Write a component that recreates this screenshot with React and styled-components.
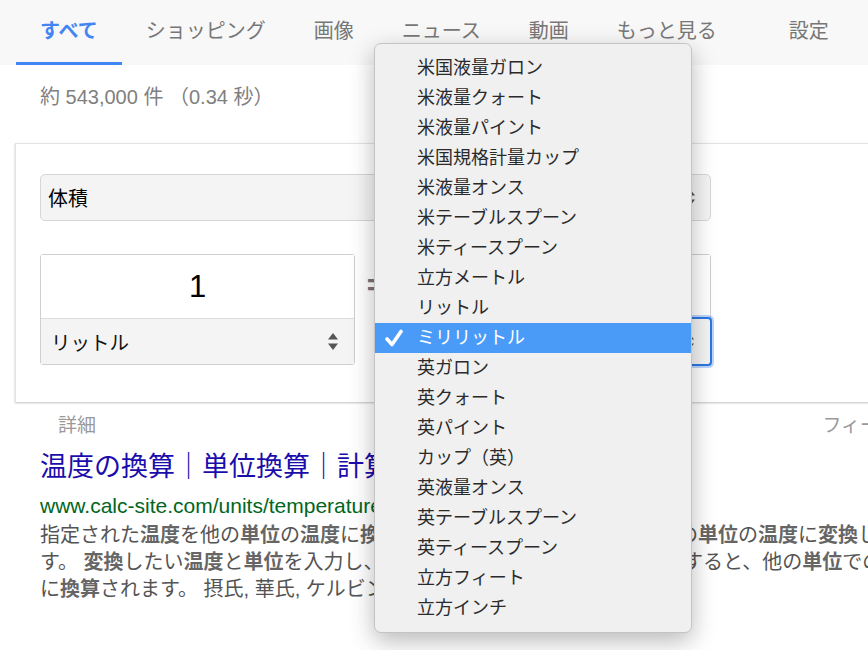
import React from 'react';
import styled, { createGlobalStyle } from 'styled-components';

// Global
const GlobalStyle = createGlobalStyle`
  html, body {
    margin: 0;
    padding: 0;
    background: #fff;
    overflow: hidden;
  }
  body {
    font-family: "Liberation Sans", Arial, "Noto Sans CJK JP", sans-serif;
  }
`;

// Data
const tabs = [
  { label: 'すべて', active: true },
  { label: 'ショッピング' },
  { label: '画像' },
  { label: 'ニュース' },
  { label: '動画' },
  { label: 'もっと見る' },
  { label: '設定', push: true },
];

const units = [
  '米国液量ガロン',
  '米液量クォート',
  '米液量パイント',
  '米国規格計量カップ',
  '米液量オンス',
  '米テーブルスプーン',
  '米ティースプーン',
  '立方メートル',
  'リットル',
  'ミリリットル',
  '英ガロン',
  '英クォート',
  '英パイント',
  'カップ（英）',
  '英液量オンス',
  '英テーブルスプーン',
  '英ティースプーン',
  '立方フィート',
  '立方インチ',
];

// Styled
const Page = styled.div`
  position: relative;
  width: 100vw;
  height: 650px;
  overflow: hidden;
`;

const Nav = styled.nav`
  display: flex;
  height: 65px;
  padding-left: 16px;
  background: #f8f8f8;
  width: 100%;
  box-sizing: border-box;
`;

const Tab = styled.div`
  display: flex;
  align-items: center;
  box-sizing: border-box;
  height: 65px;
  padding: 0 24px 4px;
  margin-left: ${p => (p.push ? '24px' : '0')};
  border-bottom: 3px solid ${p => (p.active ? '#4285f4' : 'transparent')};
  font-size: 20px;
  font-weight: ${p => (p.active ? 'bold' : 'normal')};
  color: ${p => (p.active ? '#4285f4' : '#777')};
  white-space: nowrap;
`;

const Main = styled.div`
  width: 980px;
`;

const Stats = styled.div`
  margin: 20px 0 34px 40px;
  line-height: 24px;
  font-size: 20px;
  color: #808080;
  white-space: nowrap;
`;

const Card = styled.div`
  margin-left: 15px;
  padding: 30px 24px 37px;
  border: 1px solid #e3e3e3;
  border-bottom: none;
  box-shadow: 0 1px 2px rgba(0, 0, 0, 0.25);
  background: #fff;
`;

const Select = styled.div`
  display: flex;
  align-items: center;
  justify-content: space-between;
  box-sizing: border-box;
  width: 671px;
  height: 47px;
  padding: 0 15px 0 7px;
  background: #f4f4f4;
  border: 1px solid #d6d6d6;
  border-radius: 5px;
  font-size: 20px;
  color: #000;
`;

const Converter = styled.div`
  display: flex;
  margin-top: 33px;
`;

const UnitBox = styled.div`
  display: flex;
  flex-direction: column;
  width: 315px;
  box-sizing: border-box;
  border: 1px solid #cfcfcf;
  border-radius: 3px;
`;

const ValueInput = styled.div`
  height: 63px;
  display: flex;
  align-items: center;
  justify-content: center;
  font-size: 31px;
  color: #000;
  border-bottom: 1px solid #dcdcdc;
  background: #fff;
`;

const UnitSelect = styled.div`
  display: flex;
  align-items: center;
  justify-content: space-between;
  height: 45px;
  padding: 0 16px 0 10px;
  background: #f4f4f4;
  font-size: 19.5px;
  color: #111;
  box-sizing: border-box;
  ${p =>
    p.focused &&
    `
    outline: 2px solid #2b78e4;
    border-radius: 2px;
    box-shadow: 0 0 0 4px rgba(66, 133, 244, 0.35);
  `}
`;

const Equals = styled.div`
  width: 41px;
  text-align: center;
  margin-top: 14px;
  font-size: 30px;
  font-weight: bold;
  color: #777;
`;

const MetaRow = styled.div`
  display: flex;
  justify-content: space-between;
  margin-top: 12px;
  padding: 0 25px 0 58px;
  line-height: 24px;
  font-size: 19px;
  color: #999;
`;

const Result = styled.div`
  padding-left: 40px;
  margin-top: 12px;
`;

const Title = styled.div`
  font-size: 27px;
  line-height: 34px;
  color: #1a0dab;
  white-space: nowrap;
`;

const Url = styled.div`
  margin-top: 9px;
  font-size: 21px;
  line-height: 26px;
  color: #006621;
  white-space: nowrap;
`;

const Snippet = styled.div`
  margin-top: 3px;
  font-size: 20px;
  line-height: 27px;
  color: #545454;
  white-space: nowrap;

  b {
    color: #666;
  }
`;

const Menu = styled.div`
  position: absolute;
  left: 374px;
  top: 43px;
  width: 318px;
  box-sizing: border-box;
  padding: 9px 0;
  background: #f0f0f0;
  border: 1px solid #c4c4c4;
  border-radius: 7px;
  box-shadow: 0 8px 24px rgba(0, 0, 0, 0.28);
`;

const MenuItem = styled.div`
  position: relative;
  height: 30px;
  line-height: 30px;
  padding-left: 42px;
  font-size: 18px;
  color: ${p => (p.selected ? '#fff' : '#2a2a2a')};
  background: ${p => (p.selected ? '#4a9bf8' : 'transparent')};
  white-space: nowrap;
`;

const Check = styled.svg`
  position: absolute;
  left: 10px;
  top: 6px;
`;

const Arrows = () => (
  <svg width="10" height="17" viewBox="0 0 10 17">
    <polygon points="5,0 10,6.5 0,6.5" fill="#555" />
    <polygon points="0,10.5 10,10.5 5,17" fill="#555" />
  </svg>
);

export default function App() {
  return (
    <Page>
      <GlobalStyle />
      <Nav>
        {tabs.map(t => (
          <Tab key={t.label} active={t.active} push={t.push}>
            {t.label}
          </Tab>
        ))}
      </Nav>
      <Main>
        <Stats>約 543,000 件 （0.34 秒）</Stats>
        <Card>
          <Select>
            <span>体積</span>
            <Arrows />
          </Select>
          <Converter>
            <UnitBox>
              <ValueInput>1</ValueInput>
              <UnitSelect>
                <span>リットル</span>
                <Arrows />
              </UnitSelect>
            </UnitBox>
            <Equals>=</Equals>
            <UnitBox>
              <ValueInput>1000</ValueInput>
              <UnitSelect focused>
                <span>ミリリットル</span>
                <Arrows />
              </UnitSelect>
            </UnitBox>
          </Converter>
        </Card>
        <MetaRow>
          <span>詳細</span>
          <span>フィードバック</span>
        </MetaRow>
        <Result>
          <Title>温度の換算｜単位換算｜計算サイト</Title>
          <Url>www.calc-site.com/units/temperature/</Url>
          <Snippet>
            指定された<b>温度</b>を他の<b>単位</b>の<b>温度</b>に<b>換算</b>します。任意の<b>単位</b>の<b>温度</b>を他の<b>単位</b>の<b>温度</b>に<b>変換</b>しま
            <br />
            す。 <b>変換</b>したい<b>温度</b>と<b>単位</b>を入力し、<b>変換</b>ボタンをクリックして再計算すると、他の<b>単位</b>での<b>温度</b>
            <br />
            に<b>換算</b>されます。 摂氏, 華氏, ケルビン, ランキン
          </Snippet>
        </Result>
      </Main>
      <Menu>
        {units.map(u => (
          <MenuItem key={u} selected={u === 'ミリリットル'}>
            {u === 'ミリリットル' && (
              <Check width="18" height="18" viewBox="0 0 18 18">
                <polyline
                  points="2,10 7,15.5 16,2.5"
                  fill="none"
                  stroke="#fff"
                  strokeWidth="3.6"
                  strokeLinecap="round"
                  strokeLinejoin="round"
                />
              </Check>
            )}
            {u}
          </MenuItem>
        ))}
      </Menu>
    </Page>
  );
}
